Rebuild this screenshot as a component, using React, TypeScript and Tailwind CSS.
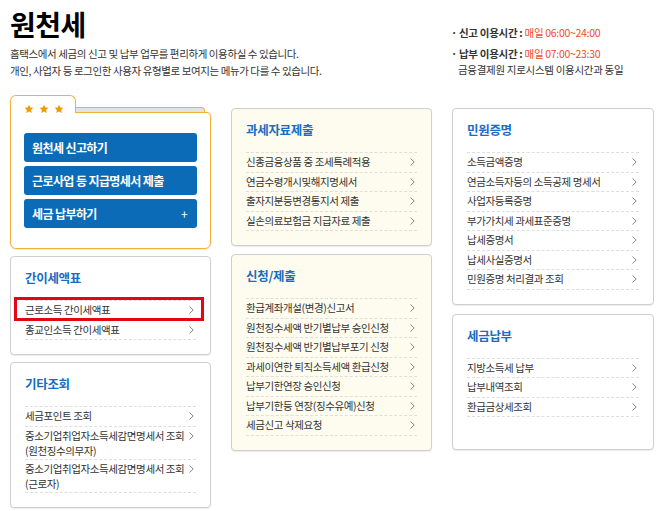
import React from 'react';

const font = { fontFamily: '"Noto Sans CJK KR", "Noto Sans", sans-serif' };

// 목록 화살표
const Arrow = () => (
  <svg width="5" height="8" viewBox="0 0 5 8" className="shrink-0 mr-[2px]">
    <path d="M0.5 0.5 L4.2 4 L0.5 7.5" fill="none" stroke="#777" strokeWidth="0.9" />
  </svg>
);

const Star = () => (
  <svg width="10" height="10" viewBox="0 0 24 24">
    <path d="M12 1.5l3.2 6.9 7.3.8-5.5 5 1.6 7.3L12 17.8l-6.6 3.7 1.6-7.3-5.5-5 7.3-.8z" fill="#f39a00" />
  </svg>
);

type Item = { label: React.ReactNode; multi?: boolean; marked?: boolean };

const Row: React.FC<{ item: Item }> = ({ item }) => (
  <li
    className={
      'relative flex justify-between border-b border-dashed border-[#dedede] text-[10.5px] tracking-[-0.4px] text-[#333] ' +
      (item.multi ? 'items-start leading-[15px] py-[1px]' : 'items-center h-[19.5px]')
    }
  >
    <span className="whitespace-nowrap">{item.label}</span>
    <span className={item.multi ? 'pt-[4px]' : ''}>
      <Arrow />
    </span>
    {item.marked && (
      <span className="absolute -left-[11px] -right-[8px] -top-[4px] -bottom-[1px] border-[3px] border-[#e30613]" />
    )}
  </li>
);

const Box: React.FC<{ title: string; items: Item[]; cream?: boolean; pb?: string }> = ({ title, items, cream, pb }) => (
  <div
    className={
      'border border-[#cfcfcf] rounded-[4px] px-[14px] shadow-[0_1px_1px_rgba(0,0,0,0.08)] ' +
      (cream ? 'bg-[#fdfcef] ' : 'bg-white ') +
      (pb || 'pb-[14px]')
    }
  >
    <h3 className="pt-[13px] pb-[14px] leading-[16px] text-[12.5px] tracking-[-0.3px] font-bold text-[#1a6cbf]">{title}</h3>
    <ul className="border-t border-dashed border-[#dedede]">
      {items.map((it, i) => (
        <Row key={i} item={it} />
      ))}
    </ul>
  </div>
);

const simple = (labels: string[]): Item[] => labels.map((label) => ({ label }));

const btn = 'h-[29px] rounded-[3px] bg-[#0b6bb7] pl-[8px] text-left text-[12px] tracking-[-0.6px] font-bold text-white';

export default function App() {
  return (
    <div className="w-[669px] h-[511px] bg-white px-[10px] overflow-hidden" style={font}>
      <div className="flex">
        <div>
          <h1 className="pt-[6px] leading-[36px] text-[28px] tracking-[-0.5px] font-bold text-black">원천세</h1>
          <p className="mt-[3px] text-[10.5px] tracking-[-0.4px] leading-[17px] text-[#333]">
            홈택스에서 세금의 신고 및 납부 업무를 편리하게 이용하실 수 있습니다.
            <br />
            개인, 사업자 등 로그인한 사용자 유형별로 보여지는 메뉴가 다를 수 있습니다.
          </p>
        </div>
        <div className="ml-auto w-[208px] pt-[25px] text-[10.5px] tracking-[-0.3px] text-[#333]">
          <p className="leading-[16px]">
            <span className="font-bold">· 신고 이용시간 : </span>
            <span className="text-[#f04a2b]">매일 06:00~24:00</span>
          </p>
          <p className="mt-[5px] leading-[16px]">
            <span className="font-bold">· 납부 이용시간 : </span>
            <span className="text-[#f04a2b]">매일 07:00~23:30</span>
          </p>
          <p className="pl-[7px] leading-[16px]">금융결제원 지로시스템 이용시간과 동일</p>
        </div>
      </div>

      <div className="mt-[16px] grid grid-cols-[201px_201px_202px] gap-x-[20px] items-start">
        {/* 왼쪽 */}
        <div className="flex flex-col gap-[7px]">
          <div>
            <div className="flex items-end">
              <div className="relative z-10 -mb-px h-[18px] w-[66px] rounded-t-[6px] border border-b-0 border-[#f5b03a] bg-white pl-[13px] pt-[8px] flex gap-[5px] items-start">
                <Star />
                <Star />
                <Star />
              </div>
              <div className="mr-[6px] h-[5px] flex-1 rounded-tr-[4px] border-t border-r border-[#f5b03a] bg-[#e2e2e2]" />
            </div>
            <div className="rounded-b-[6px] rounded-tr-[4px] border border-[#f5b03a] bg-white px-[13px] py-[20px] flex flex-col gap-[4px] shadow-[0_1px_1px_rgba(0,0,0,0.08)]">
              <button className={btn}>원천세 신고하기</button>
              <button className={btn}>근로사업 등 지급명세서 제출</button>
              <button className={btn + ' pr-[10px] flex items-center justify-between'}>
                <span>세금 납부하기</span>
                <span className="text-[12px] font-normal leading-none">+</span>
              </button>
            </div>
          </div>
          <Box
            title="간이세액표"
            items={[{ label: '근로소득 간이세액표', marked: true }, { label: '종교인소득 간이세액표' }]}
          />
          <Box
            title="기타조회"
            items={[
              { label: '세금포인트 조회' },
              {
                label: (
                  <>
                    중소기업취업자소득세감면명세서 조회
                    <br />
                    (원천징수의무자)
                  </>
                ),
                multi: true,
              },
              {
                label: (
                  <>
                    중소기업취업자소득세감면명세서 조회
                    <br />
                    (근로자)
                  </>
                ),
                multi: true,
              },
            ]}
          />
        </div>

        {/* 가운데 */}
        <div className="mt-[13px] flex flex-col gap-[8px]">
          <Box
            cream
            title="과세자료제출"
            items={simple([
              '신종금융상품 중 조세특례적용',
              '연금수령개시및해지명세서',
              '출자지분등변경통지서 제출',
              '실손의료보험금 지급자료 제출',
            ])}
          />
          <Box
            cream
            title="신청/제출"
            items={simple([
              '환급계좌개설(변경)신고서',
              '원천징수세액 반기별납부 승인신청',
              '원천징수세액 반기별납부포기 신청',
              '과세이연한 퇴직소득세액 환급신청',
              '납부기한연장 승인신청',
              '납부기한등 연장(징수유예)신청',
              '세금신고 삭제요청',
            ])}
          />
        </div>

        {/* 오른쪽 */}
        <div className="mt-[13px] flex flex-col gap-[9px]">
          <Box
            title="민원증명"
            items={simple([
              '소득금액증명',
              '연금소득자등의 소득공제 명세서',
              '사업자등록증명',
              '부가가치세 과세표준증명',
              '납세증명서',
              '납세사실증명서',
              '민원증명 처리결과 조회',
            ])}
          />
          <Box title="세금납부" pb="pb-[32px]" items={simple(['지방소득세 납부', '납부내역조회', '환급금상세조회'])} />
        </div>
      </div>
    </div>
  );
}
